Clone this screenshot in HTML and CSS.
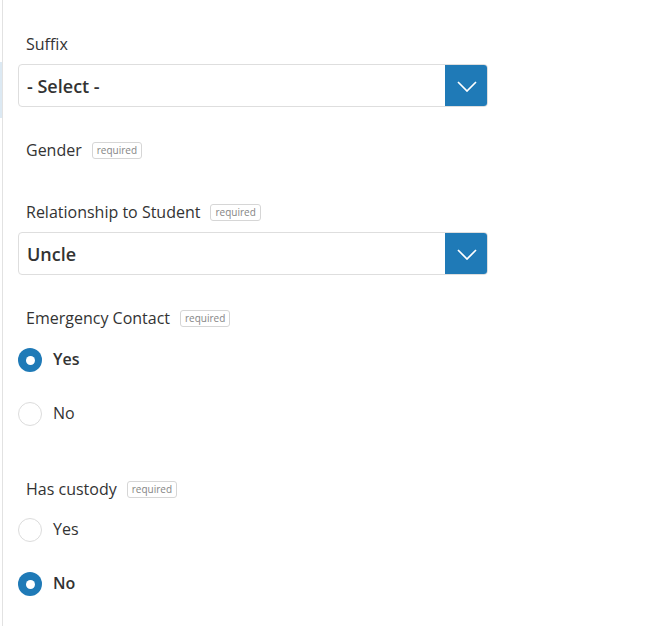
FILE: index.html
```html
<!DOCTYPE html>
<html lang="en">
<head>
<meta charset="utf-8">
<title>Guardian form</title>
<link rel="stylesheet" href="styles.css">
</head>
<body>
<div class="page">
  <div class="rail"><div class="rail-mark"></div></div>
  <main class="main">
    <form class="form">
      <div class="field field-suffix">
        <div class="field-label">Suffix</div>
        <div class="select">
          <span class="select-value">- Select -</span>
          <span class="select-btn">
            <svg width="20" height="11" viewBox="0 0 20 11"><path d="M1 1 L10 10 L19 1" fill="none" stroke="#fff" stroke-width="1.7"/></svg>
          </span>
        </div>
      </div>

      <div class="field field-gender">
        <div class="field-label">Gender <span class="tag">required</span></div>
      </div>

      <div class="field field-rel">
        <div class="field-label">Relationship to Student <span class="tag">required</span></div>
        <div class="select">
          <span class="select-value">Uncle</span>
          <span class="select-btn">
            <svg width="20" height="11" viewBox="0 0 20 11"><path d="M1 1 L10 10 L19 1" fill="none" stroke="#fff" stroke-width="1.7"/></svg>
          </span>
        </div>
      </div>

      <div class="field field-emergency">
        <div class="field-label">Emergency Contact <span class="tag">required</span></div>
        <div class="radios">
          <div class="radio checked"><span class="dot"></span><span class="radio-text">Yes</span></div>
          <div class="radio"><span class="dot"></span><span class="radio-text">No</span></div>
        </div>
      </div>

      <div class="field field-custody">
        <div class="field-label">Has custody <span class="tag">required</span></div>
        <div class="radios radios-custody">
          <div class="radio"><span class="dot"></span><span class="radio-text">Yes</span></div>
          <div class="radio checked"><span class="dot"></span><span class="radio-text">No</span></div>
        </div>
      </div>
    </form>
  </main>
</div>
</body>
</html>
```

FILE: styles.css
```css
html, body {
  margin: 0;
  padding: 0;
  background: #fff;
}
body {
  font-family: "Open Sans", "Liberation Sans", sans-serif;
  color: #333;
}
.page {
  display: flex;
  min-height: 626px;
}
.rail {
  width: 2px;
  flex: none;
}
.rail-mark {
  margin-top: 62px;
  height: 56px;
  background: #dce9f3;
}
.main {
  flex: 1;
  border-left: 1px solid #e2e2e2;
  padding: 34px 0 0 15px;
}
.form {
  width: 470px;
}
.field-label {
  display: flex;
  align-items: center;
  height: 20px;
  line-height: 20px;
  padding-left: 8px;
  font-size: 16px;
  color: #333;
}
.tag {
  display: inline-block;
  margin-left: 10px;
  height: 15px;
  line-height: 15px;
  padding: 0 4px;
  border: 1px solid #d6d6d6;
  border-radius: 3px;
  font-size: 10px;
  color: #858585;
}
.select {
  display: flex;
  margin-top: 10px;
  height: 43px;
  box-sizing: border-box;
  border: 1px solid #dedede;
  border-radius: 4px;
  overflow: hidden;
}
.select-value {
  flex: 1;
  display: flex;
  align-items: center;
  padding-left: 8px;
  font-size: 18px;
  font-weight: 600;
  color: #333;
}
.select-btn {
  width: 43px;
  display: flex;
  align-items: center;
  justify-content: center;
  background: #1f7ab7;
  margin: -1px -1px -1px 0;
}
.select-btn svg {
  display: block;
  margin-top: 1px;
}
.field-gender { margin-top: 33px; }
.field-rel { margin-top: 42px; }
.field-emergency { margin-top: 33px; }
.field-custody { margin-top: 53px; }
.radios {
  display: flex;
  flex-direction: column;
  gap: 30px;
  margin-top: 20px;
}
.radios-custody { margin-top: 19px; }
.radio {
  display: flex;
  align-items: center;
  gap: 11px;
  height: 24px;
  font-size: 16px;
  color: #333;
}
.dot {
  width: 24px;
  height: 24px;
  box-sizing: border-box;
  border-radius: 50%;
  border: 1px solid #dcdcdc;
  background: #fff;
  flex: none;
  display: flex;
  align-items: center;
  justify-content: center;
}
.radio.checked .dot {
  border: none;
  background: #1f7ab7;
}
.radio.checked .dot::after {
  content: "";
  width: 9px;
  height: 9px;
  border-radius: 50%;
  background: #fff;
}
.radio-text {
  margin-top: -3px;
}
.radio.checked .radio-text {
  font-weight: 600;
}
```
